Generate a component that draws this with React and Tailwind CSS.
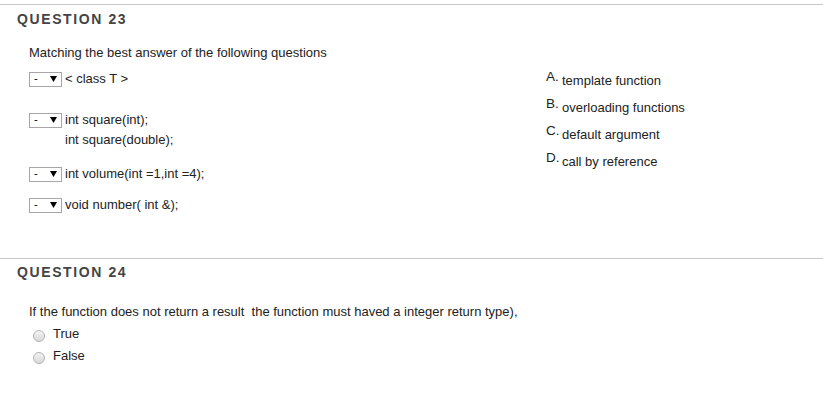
import React from "react";

function Sel() {
  return (
    <div className="flex h-[15px] w-[33px] shrink-0 items-center justify-between border border-[#a6a6a6] bg-white pl-[4px] pr-[4px] text-[11px] leading-none text-black">
      <span className="mt-[-2px]">-</span>
      <svg width="7" height="6" viewBox="0 0 7 6" className="mt-[-1px]">
        <path d="M0 0 H7 L3.5 6 Z" fill="#000" />
      </svg>
    </div>
  );
}

function Row({ className, children }) {
  return (
    <div className={"flex items-start " + className}>
      <Sel />
      <div className="ml-[3px] text-[13px] leading-[20px] mt-[-3px]">{children}</div>
    </div>
  );
}

function Ans({ l, t }) {
  return (
    <div className="flex h-[27px] items-start">
      <span className="w-[15px] text-[13.5px] leading-[16px]">{l}</span>
      <span className="ml-[1px] mt-[4px] text-[13px] leading-[16px]">{t}</span>
    </div>
  );
}

function Radio({ label, className }) {
  return (
    <div className={"flex items-center " + className}>
      <span className="ml-[33px] mt-[3px] h-[12px] w-[12px] rounded-full border border-[#b4b4b4] bg-gradient-to-b from-[#f4f4f4] to-[#d8d8d8]" />
      <span className="ml-[8px] text-[13px] leading-[20px]">{label}</span>
    </div>
  );
}

export default function App() {
  return (
    <div
      className="h-[400px] w-[823px] overflow-hidden bg-white text-[#222]"
      style={{ fontFamily: '"Liberation Sans", Arial, sans-serif' }}
    >
      <div className="h-[4px]" />
      <section className="h-[254px] border-t border-[#c9c9c9]">
        <h2 className="ml-[17px] mt-[6px] text-[14px] font-bold leading-[16px] tracking-[1.6px] text-[#444]">
          QUESTION 23
        </h2>
        <div className="flex">
          <div className="w-[546px] pl-[29px]">
            <p className="mt-[16px] text-[13px] leading-[20px]">
              Matching the best answer of the following questions
            </p>
            <Row className="mt-[9px]">&lt; class T &gt;</Row>
            <Row className="mt-[24px]">
              <div>int square(int);</div>
              <div>int square(double);</div>
            </Row>
            <Row className="mt-[17px]">int volume(int =1,int =4);</Row>
            <Row className="mt-[14px]">void number( int &amp;);</Row>
          </div>
          <div className="mt-[42px]">
            <Ans l="A." t="template function" />
            <Ans l="B." t="overloading functions" />
            <Ans l="C." t="default argument" />
            <Ans l="D." t="call by reference" />
          </div>
        </div>
      </section>
      <section className="border-t border-[#c9c9c9]">
        <h2 className="ml-[17px] mt-[5px] text-[14px] font-bold leading-[16px] tracking-[1.6px] text-[#444]">
          QUESTION 24
        </h2>
        <p className="ml-[29px] mt-[22px] whitespace-pre text-[13px] leading-[20px]">
          {"If the function does not return a result  the function must haved a integer return type),"}
        </p>
        <Radio label="True" className="mt-[2px]" />
        <Radio label="False" className="mt-[2px]" />
      </section>
    </div>
  );
}
